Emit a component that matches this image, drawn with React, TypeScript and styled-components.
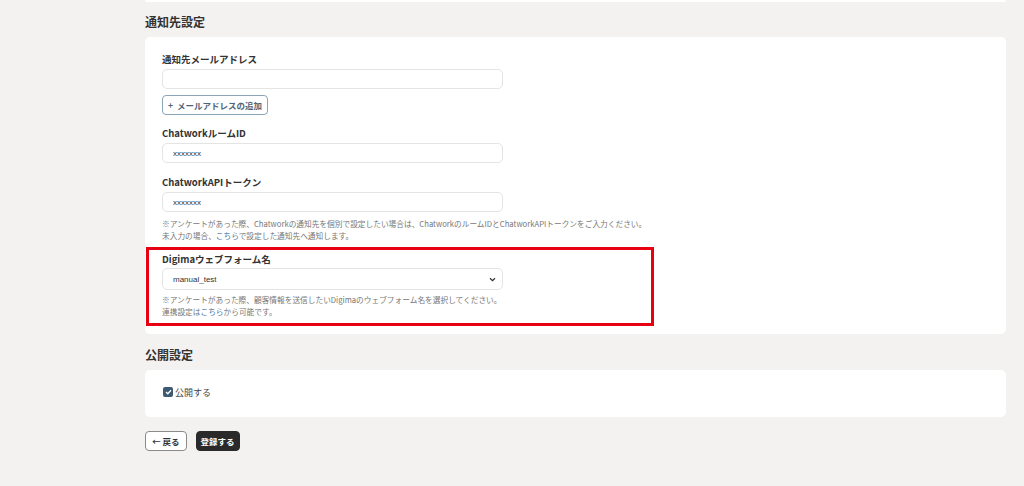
import React from "react";
import styled, { createGlobalStyle } from "styled-components";

const Global = createGlobalStyle`
  html, body { margin: 0; padding: 0; background: #f3f2f0; }
  body { font-family: "Noto Sans CJK JP", "Noto Sans", sans-serif; color: #333; }
  * { box-sizing: border-box; }
`;

const Page = styled.div`
  width: 1024px;
  height: 486px;
  overflow: hidden;
  padding: 0 18px 0 145px;
  display: flex;
  flex-direction: column;
`;

const TopCardEdge = styled.div`
  height: 2px;
  background: #fff;
  border-radius: 0 0 4px 4px;
`;

const SectionTitle = styled.h2<{ $top: number }>`
  margin: 0;
  font-size: 12px;
  font-weight: 700;
  color: #333;
  line-height: 16px;
  padding-top: ${(p) => p.$top}px;
`;

const Card = styled.div<{ $pt: number; $pb: number; $mt: number }>`
  background: #fff;
  border-radius: 5px;
  margin-top: ${(p) => p.$mt}px;
  padding: ${(p) => p.$pt}px 17px ${(p) => p.$pb}px 17px;
  display: flex;
  flex-direction: column;
`;

const Field = styled.div<{ $mt?: number }>`
  display: flex;
  flex-direction: column;
  margin-top: ${(p) => p.$mt ?? 0}px;
`;

const Label = styled.div<{ $mb?: number }>`
  font-size: 9.5px;
  font-weight: 700;
  line-height: 12px;
  height: 12px;
  color: #333;
  margin-bottom: ${(p) => p.$mb ?? 4}px;
`;

const Input = styled.div`
  width: 341px;
  height: 20px;
  border: 1px solid #e4e4e4;
  border-radius: 5px;
  background: #fff;
  font-family: "Liberation Sans", "Noto Sans", sans-serif;
  font-size: 8px;
  color: #333;
  display: flex;
  align-items: center;
  padding-left: 10px;
`;

const SelectBox = styled(Input)`
  height: 22px;
  justify-content: space-between;
  padding-right: 6px;
`;

const AddButton = styled.button`
  margin-top: 6px;
  align-self: flex-start;
  height: 20px;
  padding: 0 5px;
  border: 1px solid #8aa4b8;
  border-radius: 4px;
  background: #fff;
  color: #4f6477;
  font-family: "Noto Sans CJK JP", sans-serif;
  font-size: 8.5px;
  font-weight: 700;
  display: flex;
  align-items: center;
  gap: 4px;
`;

const Help = styled.p<{ $mt?: number }>`
  margin: ${(p) => p.$mt ?? 6}px 0 0 0;
  font-size: 7.7px;
  line-height: 12px;
  color: #777;
`;

const Link = styled.a`
  color: #4a78a8;
  text-decoration: none;
`;

const Highlight = styled.div`
  margin: 5px 0 0 -16px;
  width: 508px;
  border: 3px solid #e60012;
  padding: 3px 13px 5px 13px;
  display: flex;
  flex-direction: column;
`;

const CheckRow = styled.label`
  display: flex;
  align-items: center;
  gap: 2px;
  height: 12px;
  font-size: 9px;
  color: #444;
  margin-left: 1px;
`;

const CheckMark = styled.span`
  width: 10px;
  height: 10px;
  border-radius: 2px;
  background: #3e5a72;
  display: flex;
  align-items: center;
  justify-content: center;
`;

const Actions = styled.div`
  display: flex;
  gap: 9px;
  margin-top: 14px;
`;

const Btn = styled.button<{ $dark?: boolean }>`
  height: 20px;
  padding: 0 ${(p) => (p.$dark ? 4 : 6)}px;
  border-radius: 4px;
  border: 1px solid ${(p) => (p.$dark ? "#2a2a2a" : "#8a8a8a")};
  background: ${(p) => (p.$dark ? "#2a2a2a" : "#fff")};
  color: ${(p) => (p.$dark ? "#fff" : "#333")};
  font-family: "Noto Sans CJK JP", sans-serif;
  font-size: 8.5px;
  font-weight: 700;
  display: flex;
  align-items: center;
  gap: 2px;
`;

export default function App() {
  return (
    <>
      <Global />
      <Page>
        <TopCardEdge />
        <SectionTitle $top={12}>通知先設定</SectionTitle>
        <Card $mt={7} $pt={16} $pb={8}>
          <Field>
            <Label>通知先メールアドレス</Label>
            <Input />
            <AddButton>
              <span>+</span>
              <span>メールアドレスの追加</span>
            </AddButton>
          </Field>
          <Field $mt={12}>
            <Label>ChatworkルームID</Label>
            <Input>xxxxxxx</Input>
          </Field>
          <Field $mt={13}>
            <Label>ChatworkAPIトークン</Label>
            <Input>xxxxxxx</Input>
            <Help>
              ※アンケートがあった際、Chatworkの通知先を個別で設定したい場合は、ChatworkのルームIDとChatworkAPIトークンをご入力ください。
              <br />
              未入力の場合、<Link>こちら</Link>で設定した通知先へ通知します。
            </Help>
          </Field>
          <Highlight>
            <Label $mb={3}>Digimaウェブフォーム名</Label>
            <SelectBox>
              <span>manual_test</span>
              <svg width="7" height="5" viewBox="0 0 7 5">
                <path d="M1 1.2 L3.5 3.7 L6 1.2" stroke="#333" strokeWidth="1.3" fill="none" />
              </svg>
            </SelectBox>
            <Help $mt={4}>
              ※アンケートがあった際、顧客情報を送信したいDigimaのウェブフォーム名を選択してください。
              <br />
              連携設定は<Link>こちら</Link>から可能です。
            </Help>
          </Highlight>
        </Card>
        <SectionTitle $top={13}>公開設定</SectionTitle>
        <Card $mt={7} $pt={16} $pb={19}>
          <CheckRow>
            <CheckMark>
              <svg width="7" height="6" viewBox="0 0 7 6">
                <path d="M1 3 L2.8 4.7 L6 1.2" stroke="#fff" strokeWidth="1.3" fill="none" />
              </svg>
            </CheckMark>
            公開する
          </CheckRow>
        </Card>
        <Actions>
          <Btn>
            <span>←</span>
            <span>戻る</span>
          </Btn>
          <Btn $dark>登録する</Btn>
        </Actions>
      </Page>
    </>
  );
}
